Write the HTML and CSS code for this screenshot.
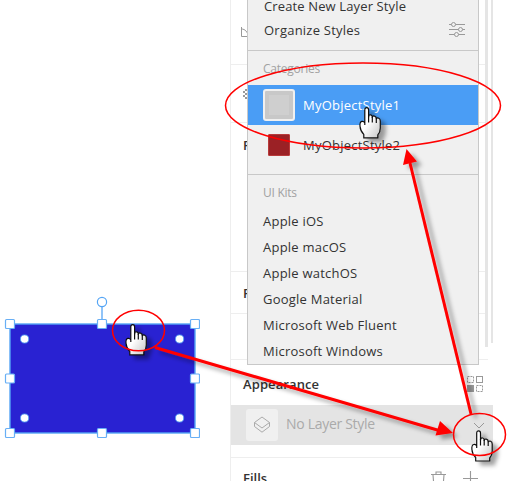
FILE: index.html
```html
<!DOCTYPE html>
<html lang="en">
<head>
<meta charset="utf-8">
<title>Layer styles</title>
<link rel="stylesheet" href="styles.css">
</head>
<body>
<main class="app">
  <section class="canvas">
    <svg class="shape" width="200" height="150" viewBox="0 290 200 150">
      <rect x="10" y="324" width="185" height="109" fill="#2922d2" stroke="#55a5f5" stroke-width="1.4"/>
      <path d="M102 307V320" stroke="#55a5f5" stroke-width="1.3"/>
      <circle cx="102" cy="302" r="4.6" fill="#fff" stroke="#55a5f5" stroke-width="1.2"/>
      <g fill="#fff" stroke="#68aff5" stroke-width="1.2">
        <rect x="5.5" y="319.5" width="9" height="9" rx="1"/><rect x="97.5" y="319.5" width="9" height="9" rx="1"/><rect x="190.5" y="319.5" width="9" height="9" rx="1"/>
        <rect x="5.5" y="374" width="9" height="9" rx="1"/><rect x="190.5" y="374" width="9" height="9" rx="1"/>
        <rect x="5.5" y="428.5" width="9" height="9" rx="1"/><rect x="97.5" y="428.5" width="9" height="9" rx="1"/><rect x="190.5" y="428.5" width="9" height="9" rx="1"/>
      </g>
      <g fill="#fff" stroke="#4ba0f3" stroke-width=".8"><circle cx="24.6" cy="339" r="4.1"/><circle cx="179.6" cy="339" r="4.1"/><circle cx="24.6" cy="418" r="4.1"/><circle cx="179.6" cy="418" r="4.1"/></g>
    </svg>
  </section>
  <aside class="panel">
    <div class="sect s1"><svg width="14" height="14" viewBox="0 0 14 14" fill="none" stroke="#999"><path d="M1.500 1V10.500H12M1.500 3C5 3 8 6 8 10.500"/></svg></div>
    <div class="sect s2"><svg width="10" height="12" viewBox="0 0 10 12" fill="#999"><path d="M0 2h2v2H0zM2 0h2v2H2zM2 4h2v2H2zM0 6h2v2H0zM2 8h2v2H2z"/></svg></div>
    <div class="sect s3"><b>P</b></div>
    <div class="sect s4"><b>P</b></div>
    <div class="sect s5"></div>
    <div class="sect appearance">
      <header class="head"><b class="title">Appearance</b>
        <svg width="17" height="17" viewBox="0 0 17 17" fill="none" stroke="#999"><rect x=".5" y=".5" width="6" height="6" stroke-dasharray="2 1"/><rect x="9.500" y=".5" width="6" height="6"/><rect x=".5" y="9.500" width="6" height="6" fill="#999"/><rect x="9.500" y="9.500" width="6" height="6" stroke-dasharray="2 1"/></svg>
      </header>
      <div class="style-row">
        <span class="thumb"><svg width="18" height="18" viewBox="0 0 18 18" fill="none" stroke="#aaa"><path d="M9 1L16.500 6.500 9 12 1.500 6.500ZM1.500 6.500V10.500L9 16.200 16.500 10.500V6.500"/></svg></span>
        <span class="none">No Layer Style</span>
        <svg class="chev" width="12" height="8" viewBox="0 0 12 8" fill="none" stroke="#999"><path d="M1 1L6 6L11 1"/></svg>
      </div>
    </div>
    <div class="fills"><b>Fills</b>
      <svg width="50" height="18" viewBox="0 0 50 18" fill="none" stroke="#999" stroke-width="1.1"><path d="M0 3.500H15M5 3V1H10V3M2 4L3 16H12L13 4M32 7.500H47M39.500 0V16"/></svg>
    </div>
  </aside>
  <div class="scroll"><i class="bar wide"></i><i class="bar thin"></i></div>
</main>

<nav class="menu">
  <div class="item create">Create New Layer Style</div>
  <div class="item organize"><span>Organize Styles</span>
    <svg width="16" height="16" viewBox="0 0 16 16" fill="none" stroke="#999"><path d="M0 2.500H2.500M6.500 2.500H16M0 7.500H9.500M13.500 7.500H16M0 12.500H5.500M9.500 12.500H16"/><circle cx="4.500" cy="2.500" r="2"/><circle cx="11.500" cy="7.500" r="2"/><circle cx="7.500" cy="12.500" r="2"/></svg>
  </div>
  <div class="label cat">Categories</div>
  <div class="choice selected"><i class="swatch grey"></i><span>MyObjectStyle1</span></div>
  <div class="choice"><i class="swatch red"></i><span>MyObjectStyle2</span></div>
  <div class="label kits">UI Kits</div>
  <div class="item kit">Apple iOS</div>
  <div class="item kit">Apple macOS</div>
  <div class="item kit">Apple watchOS</div>
  <div class="item kit">Google Material</div>
  <div class="item kit">Microsoft Web Fluent</div>
  <div class="item kit">Microsoft Windows</div>
</nav>

<svg class="notes" width="515" height="481" viewBox="0 0 515 481">
  <defs>
    <filter id="shadow" x="-30%" y="-30%" width="180%" height="180%"><feDropShadow dx="5" dy="4" stdDeviation="2" flood-color="#000" flood-opacity=".36"/></filter>
    <linearGradient id="skin" x1="0" y1="0" x2="1" y2="1"><stop offset=".45" stop-color="#fff"/><stop offset="1" stop-color="#c4c4c4"/></linearGradient>
    <g id="hand"><path d="M5.500 18V3Q5.500 .8 7.500 .8Q9.300 .8 9.300 3V10Q9.500 7.500 11.500 8Q13 8.300 13 10.500Q13.500 8.600 15.200 9.200Q17 9.600 17 11.800Q17.500 10.600 19.500 11.300Q21 12 21 14V21Q21 25 18.500 28V31H4.500V27.500Q1 24 .7 19.500Q.3 15 2.500 14.500Q4.500 14 5.500 16" fill="url(#skin)" stroke="#111" stroke-width="1.200" stroke-linejoin="round"/><path d="M9.300 9V15.500M13 10V15.500M17 11.500V16" fill="none" stroke="#111" stroke-width="1.200"/></g>
  </defs>
  <g filter="url(#shadow)"><path d="M155 347.500L439 430.500" stroke="red" stroke-width="3"/><path d="M453 433L435.500 435.500L440 421Z" fill="red"/></g>
  <g filter="url(#shadow)"><path d="M471 414L410 163" stroke="red" stroke-width="3"/><path d="M406.500 149L417 161.500L403 165Z" fill="red"/></g>
  <use href="#hand" x="125.300" y="323.900" filter="url(#shadow)"/>
  <use href="#hand" x="359.300" y="106.900" filter="url(#shadow)"/>
  <use href="#hand" x="471.200" y="430" filter="url(#shadow)"/>
  <g fill="none" stroke="red" stroke-width="1.500"><ellipse cx="363" cy="105.500" rx="137.500" ry="42.500"/><ellipse cx="138.500" cy="330.500" rx="26" ry="20.300"/><ellipse cx="479.500" cy="434.500" rx="26" ry="21"/></g>
</svg>
</body>
</html>
```
FILE: styles.css
```css
* { box-sizing: border-box; }
body { margin: 0; width: 515px; height: 481px; overflow: hidden; position: relative; background: #fff; color: #333; font: 13px/20px "Open Sans", "Noto Sans", sans-serif; }
svg { display: block; flex: none; }
.app { display: flex; height: 481px; overflow: hidden; }
.canvas { width: 230px; padding-top: 290px; }
.panel { width: 255px; border-left: 1px solid #eee; flex: none; }
.panel b { font-weight: 600; }
.title { letter-spacing: .1px; }
.sect { border-bottom: 1px solid #eee; width: 257px; }
.s1 { height: 65px; padding: 26px 0 0 9px; }
.s2 { height: 58px; padding: 24px 0 0 12px; }
.s3 { height: 149px; padding: 12px 0 0 12px; }
.s4 { height: 42px; padding: 11px 0 0 12px; }
.s5 { height: 46px; }
.appearance { height: 98px; }
.head { height: 45px; padding: 2px 11px 0 12px; display: flex; align-items: center; justify-content: space-between; width: 264px; }
.head svg { margin-top: 2px; }
.style-row { height: 40px; width: 262px; background: #e4e4e4; display: flex; align-items: center; padding-left: 15px; }
.thumb { width: 32px; height: 32px; border-radius: 3px; background: #f0f0f0; display: grid; place-items: center; }
.none { margin-left: 8px; margin-top: -2px; color: #aaa; font-size: 14px; letter-spacing: -.3px; width: 187px; }
.chev { margin-top: 2px; }
.fills { display: flex; justify-content: space-between; width: 250px; padding: 10px 0 0 12px; }
.fills svg { margin-top: 3px; }
.scroll { display: flex; }
.bar { background: #e5e5e5; }
.wide { width: 3px; height: 347px; }
.thin { width: 2px; height: 343px; margin-left: 3px; }
.menu { position: absolute; left: 247px; top: -4px; width: 232px; height: 369px; background: #f0f0f0; border: 1px solid #c8c8c8; border-top: 0; letter-spacing: .23px; }
.item { padding-left: 16px; white-space: nowrap; }
.create { height: 24px; letter-spacing: .13px; }
.organize { height: 31px; display: flex; justify-content: space-between; padding-right: 13px; border-bottom: 1px solid #c8c8c8; }
.organize svg { margin-top: 2px; }
.label { color: #a2a2a2; font-size: 12px; padding-left: 15px; letter-spacing: -.25px; }
.cat { height: 34px; padding-top: 8px; }
.choice { height: 40px; display: flex; align-items: center; padding-left: 15px; }
.choice span { margin-left: 8px; }
.selected { background: #4a9df5; color: #fff; }
.swatch { width: 32px; height: 32px; border-radius: 3px; background: #cfcfcf; border: 2px solid #f0f0f0; }
.grey { box-shadow: inset 0 0 0 4px #c8c8c8; }
.red { width: 22px; height: 22px; border: 1px solid #b83a3a; border-radius: 1px; background: #9b2125; margin: 0 5px; }
.kits { border-top: 1px solid #c8c8c8; margin-top: 9px; height: 34px; padding-top: 8px; }
.kit { height: 26px; padding-left: 15px; line-height: 26px; }
.notes { position: absolute; inset: 0; }
```
